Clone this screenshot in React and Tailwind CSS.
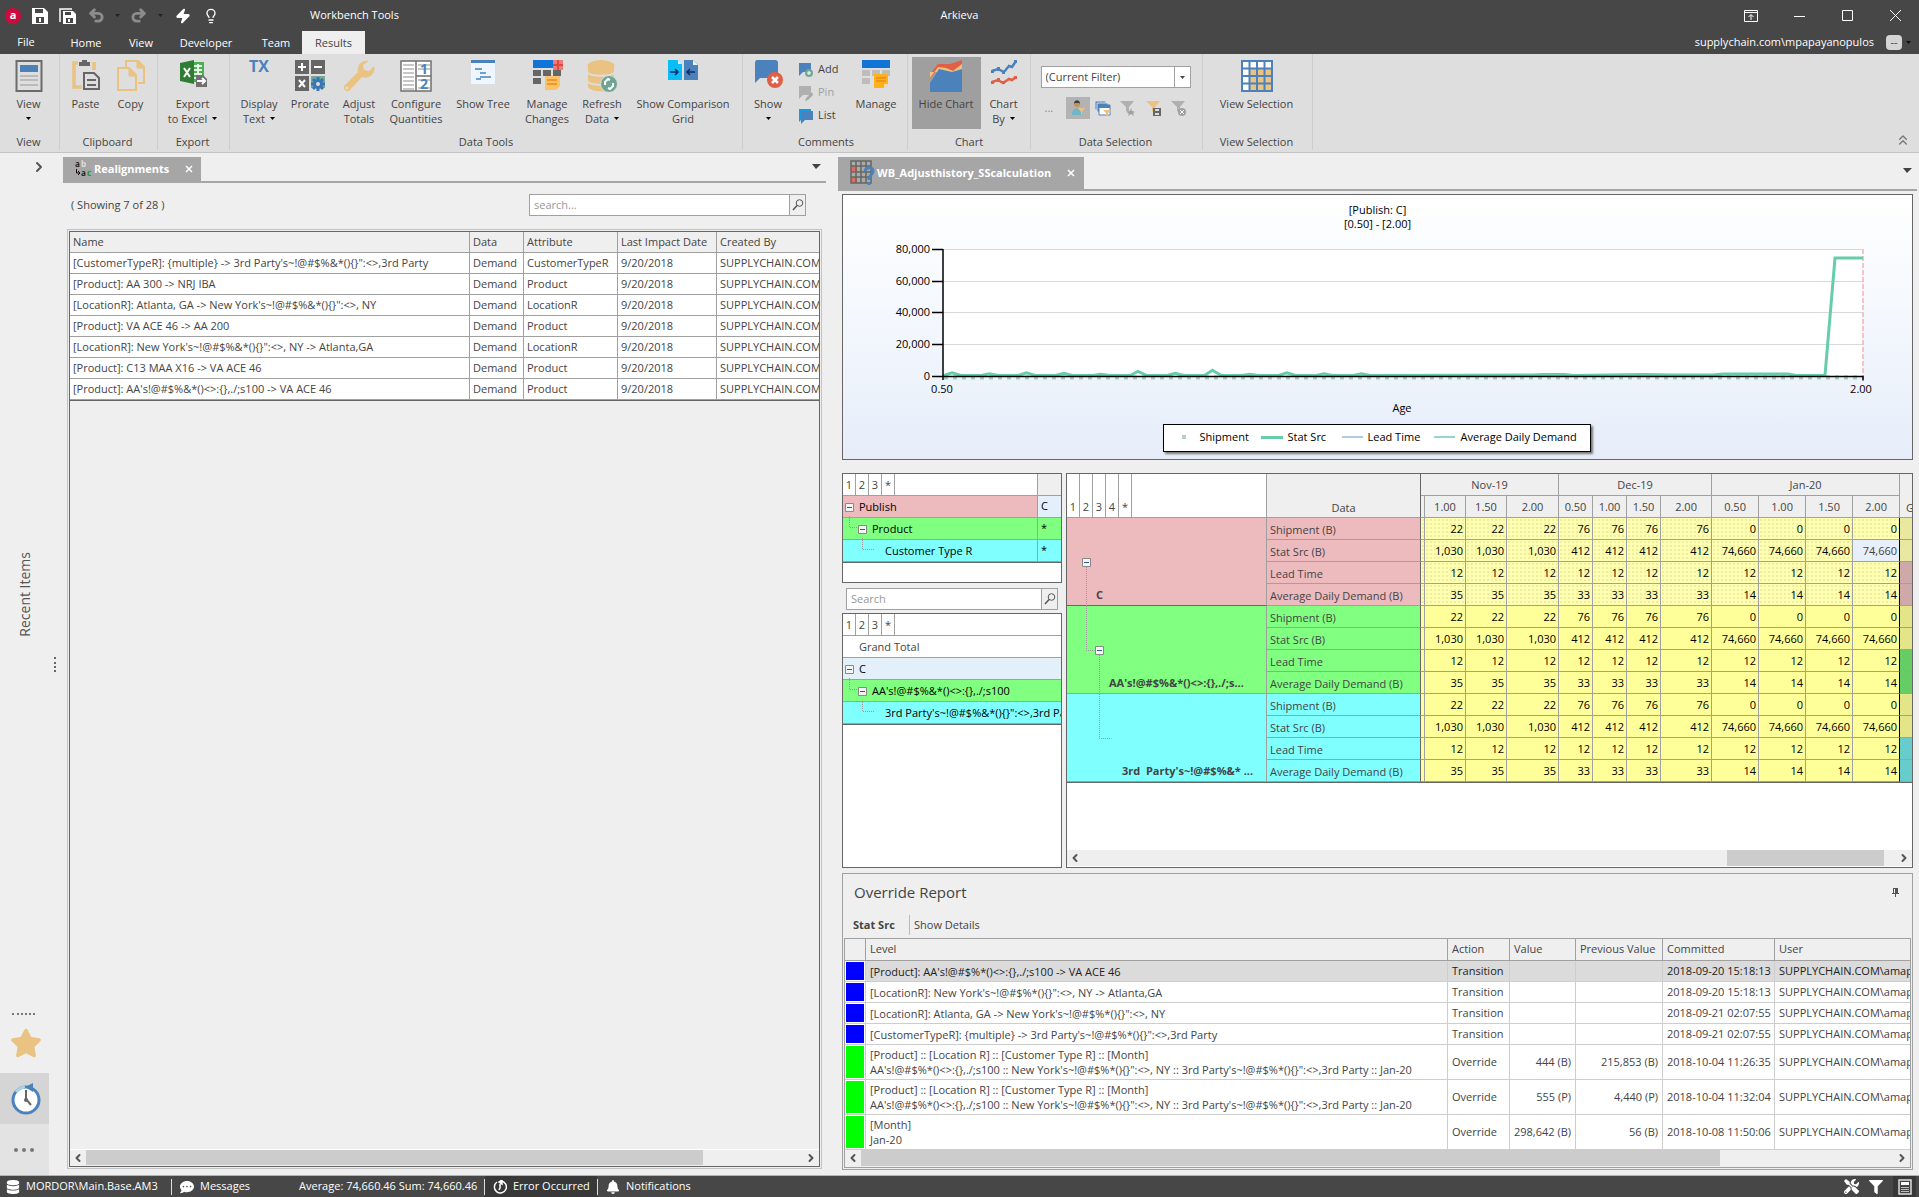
import React from 'react';
import { ChevronLeft, ChevronRight, ChevronsUp, Undo2, Redo2, Zap, Lightbulb } from 'lucide-react';
import { FaStar, FaBell, FaDatabase, FaFilter, FaCommentDots, FaTools } from 'react-icons/fa';

const realignments = [
  [`[CustomerTypeR]: {multiple} -> 3rd Party's~!@#$%&*(){}":<>,3rd Party`, 'CustomerTypeR'],
  ['[Product]: AA 300 -> NRJ IBA', 'Product'],
  [`[LocationR]: Atlanta, GA -> New York's~!@#$%&*(){}":<>, NY`, 'LocationR'],
  ['[Product]: VA ACE 46 -> AA 200', 'Product'],
  [`[LocationR]: New York's~!@#$%&*(){}":<>, NY -> Atlanta,GA`, 'LocationR'],
  ['[Product]: C13 MAA X16 -> VA ACE 46', 'Product'],
  [`[Product]: AA's!@#$%&*()<>:{},./;s100 -> VA ACE 46`, 'Product'],
];

const longPath = `AA's!@#$%*()<>:{},./;s100 :: New York's~!@#$%*(){}":<>, NY :: 3rd Party's~!@#$%*(){}":<>,3rd Party :: Jan-20`;
const longLevel = '[Product] :: [Location R] :: [Customer Type R] :: [Month]';

const overrides = [
  { level: [`[Product]: AA's!@#$%*()<>:{},./;s100 -> VA ACE 46`], action: 'Transition', date: '2018-09-20 15:18:13', selected: true },
  { level: [`[LocationR]: New York's~!@#$%*(){}":<>, NY -> Atlanta,GA`], action: 'Transition', date: '2018-09-20 15:18:13' },
  { level: [`[LocationR]: Atlanta, GA -> New York's~!@#$%*(){}":<>, NY`], action: 'Transition', date: '2018-09-21 02:07:55' },
  { level: [`[CustomerTypeR]: {multiple} -> 3rd Party's~!@#$%*(){}":<>,3rd Party`], action: 'Transition', date: '2018-09-21 02:07:55' },
  { level: [longLevel, longPath], action: 'Override', value: '444 (B)', previous: '215,853 (B)', date: '2018-10-04 11:26:35' },
  { level: [longLevel, longPath], action: 'Override', value: '555 (P)', previous: '4,440 (P)', date: '2018-10-04 11:32:04' },
  { level: ['[Month]', 'Jan-20'], action: 'Override', value: '298,642 (B)', previous: '56 (B)', date: '2018-10-08 11:50:06' },
];

const measures = [
  { name: 'Shipment (B)', values: ['22', '22', '22', '76', '76', '76', '76', '0', '0', '0', '0'] },
  { name: 'Stat Src (B)', values: ['1,030', '1,030', '1,030', '412', '412', '412', '412', '74,660', '74,660', '74,660', '74,660'] },
  { name: 'Lead Time', values: ['12', '12', '12', '12', '12', '12', '12', '12', '12', '12', '12'] },
  { name: 'Average Daily Demand (B)', values: ['35', '35', '35', '33', '33', '33', '33', '14', '14', '14', '14'] },
];

const groups = [
  { label: 'C', bg: 'bg-[#edbbbe]', total: 'bg-[#cfa8aa]', yellow: 'bg-[#e8e8a0]', pad: 'pl-[29px]' },
  { label: `AA's!@#$%&*()<>:{},./;s...`, bg: 'bg-[#80ff80]', total: 'bg-[#66cc66]', yellow: 'bg-[#e4e488]', pad: 'pl-[42px]' },
  { label: `3rd  Party's~!@#$%&* ...`, bg: 'bg-[#80ffff]', total: 'bg-[#66cccc]', yellow: 'bg-[#e4e488]', pad: 'pl-[55px]' },
];

const ages = ['1.00', '1.50', '2.00', '0.50', '1.00', '1.50', '2.00', '0.50', '1.00', '1.50', '2.00'];
const pivotCols = [200, 154, 4, 41, 41, 52, 34, 34, 34, 51, 47, 47, 47, 47];
const dotted = 'bg-[#feffb0] bg-[radial-gradient(#eeee9e_1px,transparent_1px)] bg-[length:4px_4px]';

function Caret({ className = '' }) {
  return (
    <svg width="5" height="3" viewBox="0 0 5 3" className={`inline-block ${className}`} aria-hidden="true">
      <path d="M0 0h5L2.500 3z" fill="currentColor" />
    </svg>
  );
}

function Scrollbar({ start, size, className = '' }) {
  return (
    <div className={`mb-px flex h-4 shrink-0 items-center bg-[#efefef] text-[#555] ${className}`}>
      <button type="button" aria-label="Scroll left" className="flex w-4 justify-center"><ChevronLeft size={12} strokeWidth={4} /></button>
      <div className="h-full flex-1">
        <div className="h-full bg-[#cccccc]" style={{ marginLeft: `${start}%`, width: `${size}%` }} />
      </div>
      <button type="button" aria-label="Scroll right" className="flex w-4 justify-center"><ChevronRight size={12} strokeWidth={4} /></button>
    </div>
  );
}

/* ---------- ribbon icons ---------- */

function Icon({ children, w = 32 }) {
  return <svg width={w} height="32" viewBox={`0 0 ${w} 32`} aria-hidden="true">{children}</svg>;
}

const ViewIcon = () => (
  <Icon>
    <rect x="3.500" y="1" width="25" height="30" fill="#dedede" stroke="#6b6b6b" strokeWidth="2" />
    <rect x="7" y="5" width="18" height="7" fill="#4b82bc" />
    <path d="M7 16h18M7 20h18M7 25h18" stroke="#bbb" strokeWidth="2" />
  </Icon>
);

const PasteIcon = () => (
  <Icon>
    <path d="M8 3H4v24h8M24 2v8" fill="none" stroke="#eac282" strokeWidth="3.500" />
    <path d="M9 6V2h3V0h5v2h3v4z" fill="#666" />
    <path d="M14 13h10l5 5v11H14z" fill="#dedede" stroke="#666" strokeWidth="2" />
    <path d="M17 20h9M17 25h9" stroke="#666" strokeWidth="2" />
  </Icon>
);

const CopyIcon = () => (
  <Icon>
    <path d="M11 7V1h12l6 6v16h-6" fill="none" stroke="#eac282" strokeWidth="2" />
    <path d="M22 1v7h7z" fill="#eac282" stroke="#eac282" />
    <path d="M3 8h11l7 7v15H3z" fill="#dedede" stroke="#eac282" strokeWidth="2" />
    <path d="M14 8v8h7z" fill="#eac282" stroke="#eac282" />
  </Icon>
);

const ExcelIcon = () => (
  <Icon>
    <path d="M15 2h12v20H15z" fill="#4caf50" />
    <path d="M17 6h8M17 10h8M17 14h8M17 18h8M21 4v16" stroke="#e8f5e9" strokeWidth="2" />
    <path d="M3 3l14-3v24L3 21z" fill="#2e7d32" />
    <path d="M7 8l6 9M13 8l-6 9" stroke="#fff" strokeWidth="2" />
    <path d="M19 15h7l4 4v8H19z" fill="#707070" />
    <path d="M20 21h8M25 18l3 3-3 3" stroke="#fff" strokeWidth="2" fill="none" />
  </Icon>
);

const TextIcon = () => <span className="h-8 text-[16px] leading-[13px] font-bold text-[#4b82bc]">TX</span>;

const gear = 'M24 17v14M17 24h14M19 19l10 10M29 19l-10 10';
const ProrateIcon = () => (
  <Icon>
    <path d="M1 0h14v14H1zM17 0h14v14H17zM1 16h14v15H1z" fill="#666" />
    <path d="M8 3v8M4 7h8M20 7h8M5 20l6 7M11 20l-6 7" stroke="#fff" strokeWidth="2" />
    <path d="M17 16h14v12H17z" fill="#74a795" />
    <path d={gear} stroke="#3a76b5" strokeWidth="3" />
    <circle cx="24" cy="24" r="5" fill="#3a76b5" />
    <circle cx="24" cy="24" r="2" fill="#dedede" />
  </Icon>
);

const WrenchIcon = () => (
  <Icon>
    <path d="M26 1a9 9 0 0 0-11 11L1 26a4 4 0 0 0 5 5l13-14a9 9 0 0 0 12-11l-5 5-5-1-1-5z" fill="#eac282" />
    <circle cx="4" cy="28" r="1.500" fill="#dedede" />
  </Icon>
);

const ConfigureIcon = () => (
  <Icon>
    <path d="M1 1h30v30H1zM16 1v30M16 16h15" fill="#fff" stroke="#707070" strokeWidth="1.500" />
    <path d="M3 5h11M3 9h11M3 13h11M3 17h11M3 21h11M3 25h11M3 29h11M18 5h12M18 9h12M18 20h12M18 28h12" stroke="#b5b5b5" strokeWidth="1.500" />
    <text x="20" y="14" fontSize="14" fontWeight="700" fill="#4b82bc">1</text>
    <text x="20" y="29" fontSize="14" fontWeight="700" fill="#4b82bc">2</text>
  </Icon>
);

const TreeIcon = () => (
  <Icon>
    <path d="M4 0h24v24H4z" fill="#eef7ff" />
    <path d="M4 0h24v3H4z" fill="#4b82bc" />
    <path d="M8 9h7M13 13h6M13 17h11M9 19h5" stroke="#4b82bc" strokeWidth="1.500" />
  </Icon>
);

const ManageChangesIcon = () => (
  <Icon>
    <path d="M2 0h20v8H2z" fill="#1175d8" />
    <path d="M22 0h10v10H22z" fill="#ef7b77" />
    <path d="M27 0v10M22 5h10" stroke="#dd4b3e" strokeWidth="2" />
    <path d="M2 10h8v6H2zM12 10h8v6h-8zM22 10h8v6h-8zM2 18h8v6H2z" fill="#666" />
    <path d="M14 16h15v10l-4 4H14z" fill="#fcc268" />
    <path d="M16 20h10M16 24h10" stroke="#f08a13" strokeWidth="1.500" />
  </Icon>
);

const RefreshIcon = () => (
  <Icon>
    <path d="M2 5v21c0 7 26 7 26 0V5z" fill="#eac282" />
    <ellipse cx="15" cy="6" rx="13.500" ry="6" fill="#eac282" />
    <path d="M1 12c3 5 25 5 28 0M1 21c3 5 25 5 28 0" stroke="#dedede" strokeWidth="2" fill="none" />
    <circle cx="23" cy="24" r="8.500" fill="#6fa592" stroke="#dedede" />
    <path d="M19 25v-3l3-3 2 1M27 23v3l-3 3-2-1" stroke="#fff" strokeWidth="2" fill="none" />
  </Icon>
);

const ComparisonIcon = () => (
  <Icon>
    <path d="M1 0h10l4 4v16H1z" fill="#09bdf6" />
    <path d="M17 0h9l5 5v15H17z" fill="#4b82bc" />
    <path d="M11 0v4h4zM26 0v5h5z" fill="#e8f4fb" />
    <path d="M3 12h8M8 9l3 3-3 3M28 12h-8M23 9l-3 3 3 3" stroke="#152a68" strokeWidth="1.500" fill="none" />
  </Icon>
);

const ShowIcon = () => (
  <Icon>
    <path d="M5 0h18c2 0 3 1 3 3v12c0 2-1 3-3 3H8l-5 5V3c0-2 1-3 2-3z" fill="#4b82bc" />
    <circle cx="23" cy="20" r="8" fill="#df6046" />
    <path d="M20 17l6 6M26 17l-6 6" stroke="#fff" strokeWidth="2.500" />
  </Icon>
);

const ManageIcon = () => (
  <Icon>
    <path d="M2 0h28v8H2z" fill="#1175d8" />
    <path d="M2 10h8v6H2zM12 10h8v6h-8zM22 10h8v6h-8zM2 18h8v6H2z" fill="#bdbdbd" />
    <path d="M14 14h14v10l-4 4H14z" fill="#ffb11b" />
    <path d="M16 18h10M16 21h10" stroke="#f08a13" strokeWidth="1.500" />
    <path d="M24 28v-4h4z" fill="#ffe0a0" />
  </Icon>
);

const HideChartIcon = () => (
  <Icon w={34}>
    <path d="M1 14L9 4h12l12-4v10L24 11l-8-3H9l-8 11z" fill="#df6046" />
    <path d="M1 18l8-11 8 1 7 3 9-7v8H1z" fill="#eac282" />
    <path d="M1 23L10 9l13 3 10-3v23H1z" fill="#4b82bc" />
  </Icon>
);

const ChartByIcon = () => (
  <Icon w={28}>
    <path d="M2 11l6-2 6 3 5-6 3 1 4-6" fill="none" stroke="#4b82bc" strokeWidth="2.500" />
    <path d="M2 22l6-2 5 3 6-4 3 1 4-3" fill="none" stroke="#df6046" strokeWidth="2.500" />
    <path d="M1 10h3v3H1zM7 7h3v4H7zM12 11h3v3h-3zM24 0h3v3h-3z" fill="#4b82bc" />
    <path d="M1 21h3v3H1zM7 18h3v4H7zM12 21h3v3h-3zM24 16h3v3h-3z" fill="#df6046" />
  </Icon>
);

const SelectionIcon = () => (
  <Icon>
    <path d="M1 1h30v30H1z" fill="#fff" />
    <path d="M9 9h22v22H9z" fill="#eac282" />
    <path d="M1 1h30v30H1zM8.500 1v30M16 1v30M23.500 1v30M1 8.500h30M1 16h30M1 23.500h30" fill="none" stroke="#4b82bc" strokeWidth="2" />
  </Icon>
);

function RibbonButton({ icon, lines, caret, width, active }) {
  return (
    <button type="button" className={`mt-[3px] flex h-[72px] flex-col items-center pt-[3px] leading-[15px] ${width} ${active ? 'bg-[#9f9f9f]' : ''}`}>
      {icon}
      <span className="mt-1 whitespace-nowrap">{lines[0]}</span>
      {(lines[1] || caret) && (
        <span className="flex h-[15px] items-center gap-[5px] whitespace-nowrap">
          {lines[1]}
          {caret && <Caret className="text-black" />}
        </span>
      )}
    </button>
  );
}

function RibbonGroup({ label, width, pad = '', children }) {
  return (
    <section className={`flex h-full shrink-0 flex-col justify-between pb-[2px] ${width}`}>
      <div className={`flex flex-1 justify-center border-r border-[#cdcdcd] ${pad}`}>{children}</div>
      <h2 className={`border-r border-[#cdcdcd] text-center leading-[17px] ${pad}`}>{label}</h2>
    </section>
  );
}

function CommentIcon({ color, badge }) {
  return (
    <svg width="16" height="16" viewBox="0 0 16 16" aria-hidden="true">
      <path d="M1 1h12v9H5l-4 4z" fill={color} />
      {badge === 'add' && <><circle cx="11" cy="11" r="4" fill="#74a795" /><path d="M11 9v4M9 11h4" stroke="#fff" /></>}
      {badge === 'pin' && <path d="M14 7l-6 6-1 3 3-1 5-5z" fill="#aaa" />}
      {badge === 'list' && <path d="M3 3h12v9H7l-4 4z" fill="#4b82bc" />}
    </svg>
  );
}

function FilterIcon({ color, badge }) {
  return (
    <svg width="18" height="18" viewBox="0 0 18 18" aria-hidden="true">
      <path d="M1 2h14L10 8v7l-3-3V8z" fill={color} />
      {badge === 'star' && <path d="M12 9l1 3 3 1-2 1 1 3-3-2-3 2 1-3-2-1 3-1z" fill="#a0a0a0" />}
      {badge === 'save' && <><path d="M8 9h8v8H8z" fill="#666" /><path d="M10 10h4v2h-4zM10 14h4v2h-4z" fill="#ddd" /></>}
      {badge === 'clear' && <><circle cx="12" cy="13" r="4" fill="#a0a0a0" /><path d="M10 11l4 4M14 11l-4 4" stroke="#fff" /></>}
    </svg>
  );
}

function Ribbon() {
  return (
    <div className="flex h-[99px] shrink-0 border-b border-[#c3c3c3] bg-[#dedede]">
      <RibbonGroup label="View" width="w-[60px]" pad="pr-[2px]">
        <RibbonButton icon={<ViewIcon />} lines={['View']} caret width="w-[57px]" />
      </RibbonGroup>
      <RibbonGroup label="Clipboard" width="w-[98px]" pad="pr-[2px]">
        <RibbonButton icon={<PasteIcon />} lines={['Paste']} width="w-[46px]" />
        <RibbonButton icon={<CopyIcon />} lines={['Copy']} width="w-[44px]" />
      </RibbonGroup>
      <RibbonGroup label="Export" width="w-[72px]" pad="pr-[2px]">
        <RibbonButton icon={<ExcelIcon />} lines={['Export', 'to Excel']} caret width="w-[60px]" />
      </RibbonGroup>
      <RibbonGroup label="Data Tools" width="w-[513px]">
        <RibbonButton icon={<TextIcon />} lines={['Display', 'Text']} caret width="w-[52px]" />
        <RibbonButton icon={<ProrateIcon />} lines={['Prorate']} width="w-[50px]" />
        <RibbonButton icon={<WrenchIcon />} lines={['Adjust', 'Totals']} width="w-[48px]" />
        <RibbonButton icon={<ConfigureIcon />} lines={['Configure', 'Quantities']} width="w-[66px]" />
        <RibbonButton icon={<TreeIcon />} lines={['Show Tree']} width="w-[68px]" />
        <RibbonButton icon={<ManageChangesIcon />} lines={['Manage', 'Changes']} width="w-[60px]" />
        <RibbonButton icon={<RefreshIcon />} lines={['Refresh', 'Data']} caret width="w-[50px]" />
        <RibbonButton icon={<ComparisonIcon />} lines={['Show Comparison', 'Grid']} width="w-[112px]" />
      </RibbonGroup>
      <RibbonGroup label="Comments" width="w-[165px]" pad="pl-[2px]">
        <RibbonButton icon={<ShowIcon />} lines={['Show']} caret width="w-[44px]" />
        <div className="flex w-[56px] flex-col pt-1 pl-2">
          <button type="button" className="flex h-[23px] items-center gap-1"><CommentIcon color="#4b82bc" badge="add" />Add</button>
          <button type="button" disabled className="flex h-[23px] items-center gap-1 text-[#a0a0a0]"><CommentIcon color="#b0b0b0" badge="pin" />Pin</button>
          <button type="button" className="flex h-[23px] items-center gap-1"><CommentIcon color="#1a9be0" badge="list" />List</button>
        </div>
        <RibbonButton icon={<ManageIcon />} lines={['Manage']} width="w-[60px]" />
      </RibbonGroup>
      <RibbonGroup label="Chart" width="w-[123px]">
        <RibbonButton icon={<HideChartIcon />} lines={['Hide Chart']} active width="w-[69px]" />
        <RibbonButton icon={<ChartByIcon />} lines={['Chart', 'By']} caret width="w-[46px]" />
      </RibbonGroup>
      <RibbonGroup label="Data Selection" width="w-[172px]" pad="pr-[2px]">
        <div className="flex w-[150px] flex-col gap-[9px] pt-3">
          <div className="relative">
            <select aria-label="Current filter" className="h-[22px] w-full appearance-none border border-[#a0a0a0] bg-white px-1 leading-[18px]" defaultValue="current">
              <option value="current">(Current Filter)</option>
            </select>
            <span className="pointer-events-none absolute top-px right-px flex h-5 w-4 items-center justify-center border-l border-[#a0a0a0] bg-white"><Caret /></span>
          </div>
          <div className="flex items-center">
            <button type="button" className="w-[26px] pl-1 text-left text-[#888]">...</button>
            <button type="button" aria-label="User filter" className="flex h-[22px] w-6 items-center justify-center bg-[#b3b3b3]">
              <svg width="16" height="16" viewBox="0 0 16 16"><circle cx="7" cy="4" r="3" fill="#c98f55" /><path d="M4 4c0-5 6-5 6 0l-1-1H5z" fill="#35403d" /><path d="M2 15c0-9 10-9 10 0z" fill="#6fb7c8" /><path d="M8 8h7l-3 4v3l-1-1v-2z" fill="#eac282" /></svg>
            </button>
            <button type="button" aria-label="Filter windows" className="flex h-[22px] w-[26px] items-center justify-center">
              <svg width="18" height="18" viewBox="0 0 18 18"><path d="M1 2h11v9H1z" fill="#4b82bc" stroke="#dedede" /><path d="M3 4h11v9H3z" fill="#4b82bc" stroke="#dedede" /><path d="M5 6h11v10H5z" fill="#fff" stroke="#4b82bc" /><path d="M5 6h11v3H5z" fill="#4b82bc" /><path d="M9 11h8l-3 3v3l-2-1v-2z" fill="#eac282" /></svg>
            </button>
            <button type="button" disabled aria-label="Favorite filter" className="flex w-[26px] justify-center"><FilterIcon color="#b0b0b0" badge="star" /></button>
            <button type="button" aria-label="Save filter" className="flex w-[26px] justify-center"><FilterIcon color="#eac282" badge="save" /></button>
            <button type="button" disabled aria-label="Clear filter" className="flex w-6 justify-center"><FilterIcon color="#b0b0b0" badge="clear" /></button>
          </div>
        </div>
      </RibbonGroup>
      <RibbonGroup label="View Selection" width="w-[110px]" pad="pr-[2px]">
        <RibbonButton icon={<SelectionIcon />} lines={['View Selection']} width="w-[100px]" />
      </RibbonGroup>
      <button type="button" aria-label="Collapse ribbon" className="mt-auto mr-2 mb-1 ml-auto text-[#777]"><ChevronsUp size={16} /></button>
    </div>
  );
}

function TitleBar() {
  return (
    <header className="shrink-0 bg-[#474747] text-white">
      <div className="grid h-[31px] grid-cols-[1fr_auto_1fr] items-center">
        <div className="flex items-center">
          <div className="flex w-[310px] items-center pl-[5px]">
            <span className="flex size-4 items-center justify-center rounded-full bg-[#cc0a3c] pb-px font-bold">a</span>
            <button type="button" aria-label="Save" className="ml-[10px]">
              <svg width="18" height="16" viewBox="0 0 18 16"><path d="M1 0h12l4 4v12H1z" fill="#fff" /><path d="M4 1h8v4H4zM5 9h8v6H5z" fill="#474747" /><path d="M8 10h2v4H8z" fill="#fff" /></svg>
            </button>
            <button type="button" aria-label="Save all" className="ml-[10px]">
              <svg width="18" height="16" viewBox="0 0 18 16"><path d="M1 14V1h12" fill="none" stroke="#fff" strokeWidth="1.500" /><path d="M4 3h10l3 3v10H4z" fill="#fff" /><path d="M6 4h6v3H6zM7 10h7v5H7z" fill="#474747" /><path d="M9 11h2v3H9z" fill="#fff" /></svg>
            </button>
            <button type="button" disabled aria-label="Undo" className="ml-[11px] text-[#8c8c8c]"><Undo2 size={17} strokeWidth={4} /></button>
            <Caret className="ml-[10px] text-[#222]" />
            <button type="button" disabled aria-label="Redo" className="ml-[10px] text-[#8c8c8c]"><Redo2 size={17} strokeWidth={4} /></button>
            <Caret className="ml-[11px] text-[#222]" />
            <button type="button" aria-label="Run" className="ml-3"><Zap size={16} fill="#fff" /></button>
            <button type="button" aria-label="Tips" className="ml-3"><Lightbulb size={16} /></button>
          </div>
          <span className="pb-px">Workbench Tools</span>
        </div>
        <h1>Arkieva</h1>
        <div className="flex justify-end">
          <button type="button" aria-label="Ribbon options" className="flex w-12 justify-center">
            <svg width="14" height="12" viewBox="0 0 14 12" fill="none" stroke="#fff"><path d="M.5.5h13v11H.5zM.5 2.500h13M7 10V5M4.500 7L7 4.500 9.500 7" /></svg>
          </button>
          <button type="button" aria-label="Minimize" className="flex w-12 justify-center">
            <svg width="11" height="11" stroke="#fff"><path d="M0 6.500h11" /></svg>
          </button>
          <button type="button" aria-label="Maximize" className="flex w-12 justify-center">
            <svg width="11" height="11" fill="none" stroke="#fff"><path d="M.5.5h10v10H.5z" /></svg>
          </button>
          <button type="button" aria-label="Close" className="flex w-12 justify-center">
            <svg width="11" height="11" stroke="#fff"><path d="M0 0l11 11M11 0L0 11" /></svg>
          </button>
        </div>
      </div>
      <nav className="flex h-[23px] items-stretch">
        <button type="button" className="w-[52px]">File</button>
        <button type="button" className="w-[68px] pt-px">Home</button>
        <button type="button" className="w-[42px] pt-px">View</button>
        <button type="button" className="w-[88px] pt-px">Developer</button>
        <button type="button" className="w-[52px] pt-px">Team</button>
        <button type="button" className="w-[63px] bg-[#efefef] pt-px text-[#444]">Results</button>
        <span className="ml-auto self-center">supplychain.com\mpapayanopulos</span>
        <button type="button" aria-label="Account" className="mr-2 ml-3 flex items-center gap-1">
          <span className="flex h-[15px] w-4 items-center justify-center rounded-sm bg-[#d5d5d5] text-[#444]">--</span>
          <Caret className="text-[#111]" />
        </button>
      </nav>
    </header>
  );
}

function SideBar() {
  return (
    <aside className="flex w-[49px] shrink-0 flex-col text-[#555]">
      <button type="button" aria-label="Expand" className="mt-[6px] ml-[31px]"><ChevronRight size={16} strokeWidth={3} /></button>
      <div className="flex flex-1 items-center justify-center">
        <button type="button" className="rotate-180 text-[14px] [writing-mode:vertical-rl]">Recent Items</button>
      </div>
      <div className="mb-3 ml-3 w-[23px] border-t-2 border-dotted border-[#777]" />
      <button type="button" aria-label="Favorites" className="flex h-[46px] items-start justify-center pl-[3px] text-[#eac282]"><FaStar size={32} /></button>
      <button type="button" aria-label="History" className="flex h-[51px] items-center justify-center bg-[#d5d5d5] pl-[3px]">
        <svg width="32" height="32" viewBox="0 0 32 32" fill="none">
          <circle cx="16" cy="17" r="13" fill="#fff" stroke="#4b82bc" strokeWidth="3" />
          <path d="M6 9a13 13 0 0 1 9-5" stroke="#a5d5e5" strokeWidth="3" />
          <path d="M15 4l8-4v9z" fill="#4b82bc" />
          <path d="M16 7v9l5 6" stroke="#666" strokeWidth="2" />
          <circle cx="16" cy="17" r="2" fill="#666" />
        </svg>
      </button>
      <button type="button" aria-label="More" className="flex h-[51px] items-center justify-center gap-1 bg-[#e3e3e3] pr-[2px]">
        <i className="size-1 rounded-full bg-[#777]" /><i className="size-1 rounded-full bg-[#777]" /><i className="size-1 rounded-full bg-[#777]" />
      </button>
    </aside>
  );
}

function SearchBox({ label, className = '' }) {
  return (
    <div className={`flex h-[22px] border border-[#a0a0a0] bg-white ${className}`}>
      <input type="text" aria-label="Search" placeholder={label} className="min-w-0 flex-1 px-1 outline-none placeholder:text-[#999]" />
      <button type="button" aria-label="Run search" className="flex w-4 items-center justify-center border-l border-[#a0a0a0] bg-[#efefef]">
        <svg width="12" height="12" viewBox="0 0 12 12" fill="none" stroke="#555"><circle cx="7.500" cy="4" r="3.300" /><path d="M5 6.500L1 11" strokeWidth="1.500" /></svg>
      </button>
    </div>
  );
}

function Realignments() {
  const th = 'border-r border-b border-[#a0a0a0] px-[3px] text-left font-normal';
  const td = 'border-r border-b border-[#a0a0a0] bg-white px-[3px] whitespace-nowrap';
  return (
    <section className="flex w-[763px] shrink-0 flex-col pt-1">
      <div className="flex h-[26px] justify-between border-b-2 border-[#a6a6a6]">
        <div className="flex w-[138px] items-center bg-[#a6a6a6] pl-3 font-bold text-white">
          <svg width="18" height="18" viewBox="0 0 18 18" className="mr-px" fontSize="8" fontWeight="700">
            <text x="0" y="7" fill="#222">a</text><text x="6" y="7" fill="#ddd">b</text><text x="6" y="16" fill="#222">a</text><text x="12" y="16" fill="#229922">c</text>
            <path d="M1.500 9v4h3M3 11l2 2-2 2" fill="none" stroke="#111" />
          </svg>
          Realignments
          <button type="button" aria-label="Close tab" className="mr-2 ml-auto"><svg width="8" height="8" stroke="#fff" strokeWidth="1.500"><path d="M1 1l6 6M7 1L1 7" /></svg></button>
        </div>
        <button type="button" aria-label="Tab list" className="mr-[5px] self-start pt-[7px]"><svg width="9" height="5" className="block"><path d="M0 0h9L4 5z" fill="#444" /></svg></button>
      </div>
      <div className="mt-[11px] mr-5 flex h-[22px] items-center justify-between pl-2">
        <span>( Showing 7 of 28 )</span>
        <SearchBox label="search..." className="w-[277px]" />
      </div>
      <div className="mt-[13px] mr-1 mb-[6px] ml-1 flex min-h-0 flex-1 border border-[#c3c3c3] p-px">
        <div className="flex min-w-0 flex-1 flex-col overflow-hidden border border-[#666]">
          <table className="w-[840px] table-fixed border-separate border-spacing-0 border-b border-[#666]">
            <colgroup><col className="w-[400px]" /><col className="w-[54px]" /><col className="w-[94px]" /><col className="w-[99px]" /><col /></colgroup>
            <thead>
              <tr className="h-[21px]"><th className={th}>Name</th><th className={th}>Data</th><th className={th}>Attribute</th><th className={th}>Last Impact Date</th><th className={th}>Created By</th></tr>
            </thead>
            <tbody>
              {realignments.map(([name, attribute]) => (
                <tr key={name} className="h-[21px]">
                  <td className={td}>{name}</td><td className={td}>Demand</td><td className={td}>{attribute}</td><td className={td}>9/20/2018</td><td className={td}>SUPPLYCHAIN.COM\amapayan</td>
                </tr>
              ))}
            </tbody>
          </table>
          <div className="flex-1" />
          <Scrollbar start={0} size={86} className="border-t border-white" />
        </div>
      </div>
    </section>
  );
}

const bumps = [2.6, 1.7, 2.6, 2.3, 1.3, 4, 2.3, 5.3, 1.3, 2.6, 1.6, 1.6];
const statLine = `M100 143.500${bumps.map((h, i) => {
  const x = 109 + i * 37.200;
  return ` L${x - 8} 143.500 L${x} ${143.500 - h} L${x + 9} 143.500`;
}).join('')} L690 143 L700 142.500 L722 142.500 L730 143.500 L800 142.500 L830 143 L870 143 L880 142 L945 142 L953 143.500 L982 143.500 L992 26 L1020 26`;

function Chart() {
  return (
    <div className="flex shrink-0 flex-col items-center border border-[#666] bg-linear-to-b from-white via-[#f3f7fd] to-[#e6edf9] pt-2 pb-[7px] text-black">
      <p className="leading-[14px]">[Publish: C]</p>
      <p className="mb-px leading-[14px]">[0.50] - [2.00]</p>
      <svg viewBox="0 0 1069 186" className="w-full" fontSize="11" role="img" aria-label="Stat Src by age">
        <path d="M100 17h920v127H100z" fill="#fff" />
        <path d="M100 17.500h920M100 49.500h920M100 80.500h920M100 112.500h920" stroke="#d9d9d9" />
        <path d="M1020 17v127" stroke="#f7b1b5" strokeWidth="1.500" strokeDasharray="5 2" />
        <path d="M101 145.500h920" stroke="#a5cbb8" strokeWidth="4" strokeDasharray="4 5" />
        <path d={statLine} fill="none" stroke="#66cdaa" strokeWidth="3" />
        <path d="M100 17v131M89 17.500h11M89 49.500h11M89 80.500h11M89 112.500h11M89 144.500h931v4" fill="none" stroke="#000" strokeWidth="1.500" />
        <g textAnchor="end">
          <text x="87" y="21">80,000</text><text x="87" y="53">60,000</text><text x="87" y="84">40,000</text><text x="87" y="116">20,000</text><text x="87" y="148">0</text>
        </g>
        <g textAnchor="middle">
          <text x="99" y="161">0.50</text><text x="1018" y="161">2.00</text><text x="559" y="180">Age</text>
        </g>
      </svg>
      <div className="mt-[6px] mr-[2px] flex h-7 w-[428px] items-center border border-black bg-white pb-[2px] pl-[18px] shadow-[2px_2px_2px_#777]">
        <i className="mr-[14px] size-1 bg-[#b4d2c2]" />
        <span className="w-[61px]">Shipment</span>
        <i className="mr-[5px] h-[3px] w-[22px] bg-[#66cdaa]" />
        <span className="w-[54px]">Stat Src</span>
        <i className="mr-[5px] h-[2px] w-[21px] bg-[#b0cbe0]" />
        <span className="w-[66px]">Lead Time</span>
        <i className="mr-[6px] h-[2px] w-[21px] bg-[#98d3d3]" />
        <span>Average Daily Demand</span>
      </div>
    </div>
  );
}

function LevelButtons({ levels }) {
  return (
    <div className="flex h-full">
      {levels.map((l) => (
        <button type="button" key={l} className="flex w-[13px] items-end justify-center border-r border-[#a0a0a0] pb-[2px]">{l}</button>
      ))}
    </div>
  );
}

function Toggle() {
  return (
    <svg width="9" height="9" viewBox="0 0 9 9" className="relative shrink-0">
      <path d="M.5.5h8v8h-8z" fill="#f4f4f4" stroke="#888" /><path d="M2 4.500h5" stroke="#33589a" />
    </svg>
  );
}

// one row of an indented tree, depth 0..2
function TreeLabel({ depth, toggle, children }) {
  const indent = ['pl-[2px]', 'pl-[15px]', 'pl-[28px]'][depth];
  return (
    <div className={`relative flex items-center gap-[5px] pt-px whitespace-nowrap ${indent}`}>
      {depth > 0 && (
        <svg width="16" height="22" className={`absolute -top-[4px] ${depth === 1 ? 'left-[6px]' : 'left-[19px]'}`}>
          <path d="M.5 0v11.500h12" fill="none" stroke="#999" strokeDasharray="1 1" />
        </svg>
      )}
      {toggle ? <Toggle /> : <i className="w-[9px] shrink-0" />}
      {children}
    </div>
  );
}

function LevelPanel() {
  const td = 'border-b border-[#a0a0a0] p-0';
  const rows = [
    ['Publish', 'C', 'bg-[#edbbbe]', 'bg-[#e3f0fa]', 0],
    ['Product', '*', 'bg-[#80ff80]', 'bg-[#80ff80]', 1],
    ['Customer Type R', '*', 'bg-[#80ffff]', 'bg-[#80ffff]', 2],
  ];
  return (
    <div className="h-[110px] shrink-0 overflow-hidden border border-[#666] bg-white">
      <table className="w-full table-fixed border-separate border-spacing-0 border-b border-[#666]">
        <colgroup><col /><col className="w-[23px]" /></colgroup>
        <tbody>
          <tr className="h-[22px]">
            <td className={`h-[22px] border-r ${td}`}><LevelButtons levels={['1', '2', '3', '*']} /></td>
            <td className={`bg-[#efefef] ${td}`} />
          </tr>
          {rows.map(([name, value, bg, valueBg, depth]) => (
            <tr key={name} className="h-[22px] text-black">
              <td className={`border-r ${td} ${bg}`}><TreeLabel depth={depth} toggle={depth < 2}>{name}</TreeLabel></td>
              <td className={`${td} ${valueBg}`}><span className="pl-[3px]">{value}</span></td>
            </tr>
          ))}
        </tbody>
      </table>
    </div>
  );
}

function MemberPanel() {
  const td = 'border-b border-[#a0a0a0] p-0';
  return (
    <div className="min-h-0 flex-1 overflow-hidden border border-[#666] bg-white">
      <table className="w-full table-fixed border-separate border-spacing-0 border-b border-[#666] text-black">
        <tbody>
          <tr><td className={`h-[22px] text-[#444] ${td}`}><LevelButtons levels={['1', '2', '3', '*']} /></td></tr>
          <tr className="h-[22px] text-[#444]"><td className={td}><TreeLabel depth={0}>Grand Total</TreeLabel></td></tr>
          <tr className="h-[22px]"><td className={`bg-[#e3f0fa] ${td}`}><TreeLabel depth={0} toggle>C</TreeLabel></td></tr>
          <tr className="h-[22px]"><td className={`bg-[#80ff80] ${td}`}><TreeLabel depth={1} toggle>{`AA's!@#$%&*()<>:{},./;s100`}</TreeLabel></td></tr>
          <tr className="h-[22px]"><td className={`overflow-hidden bg-[#80ffff] ${td}`}><TreeLabel depth={2}>{`3rd Party's~!@#$%&*(){}":<>,3rd Party`}</TreeLabel></td></tr>
        </tbody>
      </table>
    </div>
  );
}

// expander and connector lines drawn in the row header of each group
function GroupTree({ index }) {
  return (
    <svg width="60" height="88" className="absolute top-0 left-0" fill="none" stroke="#999" strokeDasharray="1 1">
      {index === 0 && <path d="M19.500 45v43" />}
      {index === 1 && <path d="M19.500 0v44.500h8M32.500 45v43" />}
      {index === 2 && <path d="M32.500 0v44.500h12" />}
      {index < 2 && (
        <g transform={index === 0 ? 'translate(15 40)' : 'translate(28 40)'} strokeDasharray="none">
          <path d="M.5.5h8v8h-8z" fill="#f4f4f4" stroke="#888" /><path d="M2 4.500h5" stroke="#33589a" />
        </g>
      )}
    </svg>
  );
}

function Pivot() {
  const line = 'border-r border-b border-[#a0a0a0] font-normal';
  return (
    <div className="flex min-w-0 flex-1 flex-col overflow-hidden border border-[#666] bg-white">
      <table className="w-full table-fixed border-separate border-spacing-0 border-b border-[#666]">
        <colgroup>
          {pivotCols.map((w, i) => <col key={i} style={{ width: w }} />)}
          <col />
        </colgroup>
        <thead className="bg-[#efefef]">
          <tr className="h-[22px]">
            <th rowSpan={2} className={`h-[44px] bg-white p-0 ${line}`}><LevelButtons levels={['1', '2', '3', '4', '*']} /></th>
            <th rowSpan={2} className={`pb-px align-bottom ${line} border-r-[#666]`}>Data</th>
            <th colSpan={4} className={`pt-[2px] ${line}`}>Nov-19</th>
            <th colSpan={4} className={`pt-[2px] ${line}`}>Dec-19</th>
            <th colSpan={4} className={`pt-[2px] ${line}`}>Jan-20</th>
            <th rowSpan={2} className="overflow-hidden border-b border-[#a0a0a0] pb-px pl-[6px] text-left align-bottom font-normal whitespace-nowrap">Grand Total</th>
          </tr>
          <tr className="h-[22px]">
            <th className={line} />
            {ages.map((age, i) => <th key={i} className={`pt-[2px] ${line}`}>{age}</th>)}
          </tr>
        </thead>
        <tbody>
          {groups.map((group, g) => measures.map((measure, m) => (
            <tr key={`${g}-${m}`} className="h-[22px]">
              {m === 0 && (
                <th rowSpan={4} className={`relative pb-[2px] text-left align-bottom font-bold ${group.bg} ${group.pad} border-r border-b border-r-[#a0a0a0] ${g === 0 ? 'border-b-[#666]' : 'border-b-[#a0a0a0]'}`}>
                  <GroupTree index={g} />
                  <span className="block whitespace-pre">{group.label}</span>
                </th>
              )}
              <td className={`pt-[3px] pl-[3px] ${line} border-r-[#666] ${group.bg}`}>{measure.name}</td>
              <td className={`${line} ${g === 0 ? dotted : 'bg-[#ffff99]'}`} />
              {measure.values.map((value, i) => {
                const current = g === 0 && m === 1 && i === 10;
                const fill = current ? 'bg-[#e6effa] text-[#444]' : g === 0 ? `${dotted} text-black` : 'bg-[#ffff99] text-black';
                return <td key={i} className={`pt-px pr-[2px] text-right ${line} ${fill} ${i === 10 ? 'border-r-black' : ''}`}>{value}</td>;
              })}
              <td className={`border-b border-[#a0a0a0] ${m < 2 ? group.yellow : group.total}`} />
            </tr>
          )))}
        </tbody>
      </table>
      <div className="flex-1" />
      <Scrollbar start={79.2} size={19.3} />
    </div>
  );
}

function OverrideReport() {
  const th = 'border-r border-b border-[#a0a0a0] px-1 text-left font-normal whitespace-nowrap';
  const td = 'border-r border-b border-[#cdcdcd] px-1 whitespace-nowrap';
  return (
    <section className="shrink-0 border border-[#a0a0a0] px-px pb-px">
      <div className="flex h-[36px] items-center justify-between pr-3 pl-[10px]">
        <h2 className="text-[15px]">Override Report</h2>
        <button type="button" aria-label="Pin panel">
          <svg width="7" height="9"><path d="M1 0h5v5h1v1H0V5h1zM3 6h1v3H3z" fill="#555" /><path d="M2 1h1v4H2z" fill="#efefef" /></svg>
        </button>
      </div>
      <div className="flex h-7 items-start pl-[9px]">
        <button type="button" className="w-[56px] text-left leading-[30px] font-bold">Stat Src</button>
        <button type="button" className="mt-[5px] border-l border-[#bbb] pl-1 leading-[20px]">Show Details</button>
      </div>
      <div className="overflow-hidden border border-[#a0a0a0]">
        <table className="w-full table-fixed border-separate border-spacing-0 bg-white">
          <colgroup><col className="w-[21px]" /><col /><col className="w-[62px]" /><col className="w-[66px]" /><col className="w-[87px]" /><col className="w-[112px]" /><col className="w-[135px]" /></colgroup>
          <thead className="bg-[#efefef]">
            <tr className="h-[22px]">
              <th className={th} /><th className={th}>Level</th><th className={th}>Action</th><th className={th}>Value</th><th className={th}>Previous Value</th><th className={th}>Committed</th>
              <th className="border-b border-[#a0a0a0] px-1 text-left font-normal">User</th>
            </tr>
          </thead>
          <tbody>
            {overrides.map((row, i) => {
              const tall = row.level.length > 1;
              return (
                <tr key={i} className={`${tall ? 'h-[35px]' : 'h-[21px]'} ${row.selected ? 'bg-[#dbdbdb] text-[#222]' : ''}`}>
                  <td className="border-r border-b border-[#cdcdcd] bg-white p-px"><div className={tall ? 'h-8 bg-[#00ff00]' : 'h-[18px] bg-[#0000ff]'} /></td>
                  <td className={`leading-[15px] ${td}`}>{row.level.map((text) => <div key={text}>{text}</div>)}</td>
                  <td className={td}>{row.action}</td>
                  <td className={`text-right ${td}`}>{row.value}</td>
                  <td className={`text-right ${td}`}>{row.previous}</td>
                  <td className={td}>{row.date}</td>
                  <td className="overflow-hidden border-b border-[#cdcdcd] px-1 whitespace-nowrap">SUPPLYCHAIN.COM\amapayanopulos</td>
                </tr>
              );
            })}
          </tbody>
        </table>
        <Scrollbar start={0} size={83.2} />
      </div>
    </section>
  );
}

function Workbench() {
  return (
    <section className="flex min-w-0 flex-1 flex-col pt-1 pr-[2px]">
      <div className="flex h-[34px] shrink-0 justify-between border-b-2 border-[#a6a6a6]">
        <div className="flex w-[246px] items-center bg-[#a6a6a6] pl-3 font-bold text-white">
          <svg width="27" height="26" viewBox="0 0 27 26">
            <path d="M1 1h20v22H1z" fill="#aaa" /><path d="M1 6h6v5H1zM1 17h6v6H1z" fill="#d9705c" />
            <path d="M1 1h20v22H1zM6 1v22M11 1v22M16 1v22M1 6h20M1 12h20M1 17h20" fill="none" stroke="#666" strokeWidth="1.500" />
            <path d="M15 11c1-5 9-4 8 1-1 3-4 3-4 8M19 22v3" fill="none" stroke="#4b82bc" strokeWidth="3" />
          </svg>
          WB_Adjusthistory_SScalculation
          <button type="button" aria-label="Close tab" className="mr-[9px] ml-auto"><svg width="8" height="8" stroke="#fff" strokeWidth="1.500"><path d="M1 1l6 6M7 1L1 7" /></svg></button>
        </div>
        <button type="button" aria-label="Tab list" className="mr-[5px] self-start pt-[11px]"><svg width="9" height="5" className="block"><path d="M0 0h9L4 5z" fill="#444" /></svg></button>
      </div>
      <div className="flex min-h-0 flex-1 flex-col pt-[3px] pr-[4px] pb-[5px] pl-1">
        <Chart />
        <div className="mt-[13px] mb-[5px] flex min-h-0 flex-1 gap-1">
          <div className="flex w-[220px] shrink-0 flex-col">
            <LevelPanel />
            <SearchBox label="Search" className="mx-1 mt-[5px] mb-[3px] shrink-0" />
            <MemberPanel />
          </div>
          <Pivot />
        </div>
        <OverrideReport />
      </div>
    </section>
  );
}

function StatusBar() {
  return (
    <footer className="flex h-[22px] shrink-0 items-center border-t border-[#b5b5b5] bg-[#474747] text-white">
      <span className="flex h-4 w-[172px] items-center gap-[6px] border-r border-[#ddd] pl-[6px]"><FaDatabase size={14} />MORDOR\Main.Base.AM3</span>
      <button type="button" className="flex w-[127px] items-center gap-[6px] pl-2"><FaCommentDots size={14} />Messages</button>
      <span className="flex h-4 w-[186px] items-center border-r border-[#ddd]">Average: 74,660.46 Sum: 74,660.46</span>
      <button type="button" className="flex h-full w-[112px] items-center gap-[6px] bg-[#383838] pl-2">
        <svg width="14" height="14" viewBox="0 0 14 14" fill="none" stroke="#fff" strokeWidth="1.500"><path d="M4 2a6 6 0 1 0 4-1M7 4v4l-1 2" /><path d="M9 0L6 2l3 2z" fill="#fff" /></svg>
        Error Occurred
      </button>
      <button type="button" className="flex h-4 items-center gap-[6px] border-l border-[#ddd] pl-2"><FaBell size={14} />Notifications</button>
      <div className="mr-[3px] ml-auto flex h-full items-center gap-[10px]">
        <button type="button" aria-label="Tools"><FaTools size={15} /></button>
        <button type="button" aria-label="Filter"><FaFilter size={14} /></button>
        <button type="button" aria-label="Layout" className="flex h-full w-[23px] items-center justify-center bg-[#383838]">
          <svg width="14" height="16" viewBox="0 0 14 16"><path d="M1 1h12v14H1z" fill="#444" stroke="#ddd" strokeWidth="1.500" /><path d="M3 3h8v3H3z" fill="#fff" /><path d="M3 8.500h8M3 10.500h8M3 12.500h8" stroke="#bbb" /></svg>
        </button>
      </div>
    </footer>
  );
}

export default function App() {
  return (
    <div className="flex h-screen min-h-[1100px] flex-col overflow-hidden bg-[#efefef] font-['Open_Sans','Noto_Sans',sans-serif] text-[11px] text-[#444]">
      <TitleBar />
      <Ribbon />
      <main className="flex min-h-0 flex-1">
        <SideBar />
        <div className="flex w-[14px] shrink-0 items-center justify-center pr-[2px]"><i className="h-[15px] border-l-2 border-dotted border-[#666]" /></div>
        <Realignments />
        <div className="w-3 shrink-0" />
        <Workbench />
      </main>
      <StatusBar />
    </div>
  );
}
